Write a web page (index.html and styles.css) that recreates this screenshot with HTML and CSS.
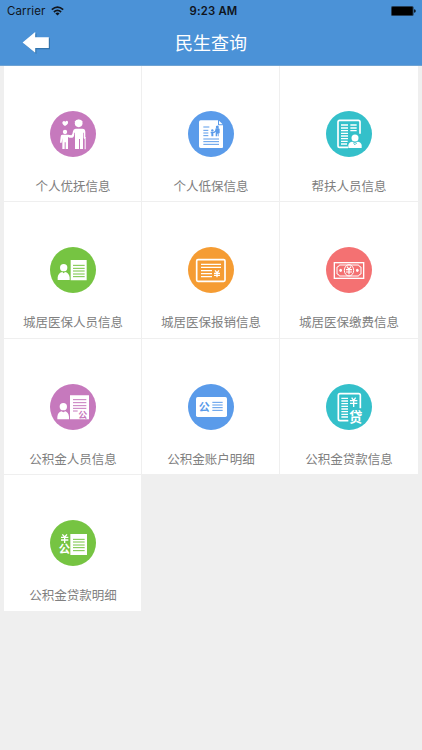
FILE: index.html
```html
<!DOCTYPE html>
<html lang="zh-CN">
<head>
<meta charset="utf-8">
<title>民生查询</title>
<link rel="stylesheet" href="styles.css">
</head>
<body>
<header class="header">
  <div class="status">
    <div class="carrier">Carrier
      <svg class="wifi" viewBox="0 0 13 10"><g fill="none" stroke="#10151c" stroke-width="1.7"><path d="M.8 3.7Q6.5-1.3 12.2 3.7"/><path d="M2.9 6Q6.5 2.8 10.1 6"/></g><path fill="#10151c" d="M4.4 7.4Q6.5 5.7 8.6 7.4L6.5 9.6z"/></svg>
    </div>
    <div class="time">9:23 AM</div>
    <div class="power"><svg class="battery" viewBox="0 0 25 10"><rect width="22.6" height="10" rx="1.6" fill="#263f58"/><rect x="1" y="1" width="20.6" height="8" rx=".6"/><path d="M23.2 3.3q1.5.2 1.5 1.7t-1.5 1.7z"/></svg></div>
  </div>
  <div class="navbar">
    <svg class="back" viewBox="0 0 28 22"><path d="M2 11.7 14.4 1.2V6.2H28V17.2H14.4V22z" fill="#3475ad"/><path d="M.6 10.4 13.2 0V5.2H26.8V16H13.2V20.8z" fill="#fff"/></svg>
    <h1 class="title">民生查询</h1>
  </div>
</header>
<main class="grid">
  <a class="cell">
    <svg class="icon purple" viewBox="51 33 138 138"><circle cx="120" cy="102" r="69"/>
      <g class="w"><path d="M96 78Q85 71 89 65Q93 61 97 65Q102 60 105 65Q107 72 96 78z"/><circle cx="96" cy="96" r="6.5"/><path d="M88 104h17l10 2q4-3 5-12 1-8 8-8h20q9 0 9 10v19h-5V98h-2v49h-9v-30h-3v30h-12V98h-2q0 13-6 15h-9l-4-2v36h-7v-20h-3v20h-7v-33l-2 14h-5l2-17q0-7 5-7z"/><circle cx="137" cy="70" r="11.5"/><path d="M127 67q10-6 20 0l3-1q-13-13-26 0z"/><path d="M153 111h5v37h-3v-32h-2z"/></g></svg>
    <span class="label">个人优抚信息</span>
  </a>
  <a class="cell">
    <svg class="icon blue" viewBox="51 33 138 138"><circle cx="120" cy="102" r="69"/>
      <path class="w" d="M89 61h52v15h15v65q0 3-3 3H89q-5 0-5-5V66q0-5 5-5z"/><path class="w" d="m144 62 11 11h-11z"/>
      <path class="l" d="M97 81h18M97 91h15M97 99h15M97 107h15M97 117h47M97 125h47M97 133h47"/>
      <g class="f"><circle cx="124" cy="91" r="3.5"/><path d="M119 95h9l4-2 2-8h10l2 3v12h-3v9h-3v-8h-2v8h-4V95l-4 4h-3v10h-6v-9h-2z"/><circle cx="139" cy="81" r="4.5"/></g></svg>
    <span class="label">个人低保信息</span>
  </a>
  <a class="cell">
    <svg class="icon teal" viewBox="51 33 138 138"><circle cx="120" cy="102" r="69"/>
      <path class="s" stroke-width="5" d="M117 142H92q-5 0-5-5V66q0-5 5-5h56q5 0 5 5v35"/>
      <path class="s" stroke-width="3.8" d="M96 75h21M124 75h19M96 84h21M124 84h19M96 92h21M124 92h19M96 100h21M96 108h21M96 116h21M96 124h20M96 132h18"/>
      <circle class="w" cx="138" cy="114" r="10.5"/><path class="w" d="M118 144v-9q2-9 12-10l8 4 8-4q10 1 12 10v9z"/><path class="l" stroke-width="2" d="m133 129 5 5 5-5"/></svg>
    <span class="label">帮扶人员信息</span>
  </a>
  <a class="cell">
    <svg class="icon green" viewBox="111 21 138 138"><circle cx="180" cy="90" r="69"/>
      <circle class="w" cx="152" cy="83" r="11"/><path class="w" d="M134 120v-8q2-14 14-16l4 4 4-4q12 2 14 16v8zM173 60h48v61h-48z"/>
      <path class="l" d="M180 76h35M180 85h35M180 93h35M180 102h35M180 110h35"/></svg>
    <span class="label">城居医保人员信息</span>
  </a>
  <a class="cell">
    <svg class="icon orange" viewBox="111 21 138 138"><circle cx="180" cy="90" r="69"/>
      <rect class="s" stroke-width="5" x="137" y="59" width="85" height="65" rx="4"/>
      <path class="s" stroke-width="4" d="M150 73h60M150 82h60M150 92h33M150 101h33M150 110h33"/>
      <path class="s" stroke-width="4" d="m192 91 6 8 6-8M198 99v13M189 100h18M189 106h18"/></svg>
    <span class="label">城居医保报销信息</span>
  </a>
  <a class="cell">
    <svg class="icon red" viewBox="111 21 138 138"><circle cx="180" cy="90" r="69"/>
      <rect class="s" stroke-width="4" x="136" y="68" width="88" height="47"/>
      <path class="s" stroke-width="3" d="M151 75h58q1 6 7 6v21q-6 0-7 6h-58q-1-6-7-6V81q6 0 7-6z"/>
      <g class="w"><ellipse cx="155" cy="91" rx="4" ry="5"/><ellipse cx="205" cy="91" rx="4" ry="5"/></g>
      <ellipse class="s" stroke-width="3" cx="180" cy="91" rx="14" ry="17"/>
      <path class="s" stroke-width="3.6" d="m174 80 6 8 6-8M180 88v15M171 89h18M171 96h18"/></svg>
    <span class="label">城居医保缴费信息</span>
  </a>
  <a class="cell">
    <svg class="icon purple" viewBox="111 26 138 138"><circle cx="180" cy="95" r="69"/>
      <circle class="w" cx="151" cy="94" r="11"/><path class="w" d="M133 132v-8q2-13 12-16 6 5 12 0 9 3 11 16v8zM171 60h57v72h-57z"/>
      <path class="l" d="M180 73h40M180 82h40M180 91h40M180 99h40M180 107h14"/>
      <text class="f glyph" x="209" y="128" font-size="27">公</text></svg>
    <span class="label">公积金人员信息</span>
  </a>
  <a class="cell">
    <svg class="icon blue" viewBox="111 26 138 138"><circle cx="180" cy="95" r="69"/>
      <rect class="w" x="135" y="65" width="93" height="60" rx="5"/>
      <text class="f glyph" x="160" y="107" font-size="33">公</text><path class="l" d="M184 81h31M184 89h31M184 97h31M184 105h31"/></svg>
    <span class="label">公积金账户明细</span>
  </a>
  <a class="cell">
    <svg class="icon teal" viewBox="525 26 138 138"><circle cx="594" cy="95" r="69"/>
      <path class="s" stroke-width="5" d="M592 136h-25q-5 0-5-5V60q0-5 5-5h56q5 0 5 5v39"/>
      <path class="s" stroke-width="3.8" d="M571 69h20M571 77h20M571 85h20M571 93h20M571 101h20M571 109h20M571 117h20M571 125h20"/>
      <path class="s" stroke-width="4" d="m602 67 6 8 6-8M608 75v20M597 76h22M597 84h22"/>
      <text class="w glyph" x="614" y="139" font-size="40">贷</text></svg>
    <span class="label">公积金贷款信息</span>
  </a>
  <a class="cell">
    <svg class="icon green" viewBox="150 165 138 138"><circle cx="219" cy="234" r="69"/>
      <path class="s" stroke-width="4" d="m187 208 7 8 7-8M194 216v18M183 217h22M183 225h22"/>
      <text class="w glyph" x="193" y="264" font-size="34">公</text>
      <path class="w" d="M211 207h50v63h-50z"/><path class="l" d="M219 223h35M219 231h35M219 240h35M219 248h35M219 257h35"/></svg>
    <span class="label">公积金贷款明细</span>
  </a>
</main>
</body>
</html>
```
FILE: styles.css
```css
* { box-sizing: border-box; }
body {
  margin: 0;
  min-height: 750px;
  background: #efefef;
  font-family: "Liberation Sans", "Noto Sans CJK SC", sans-serif;
}
.header {
  height: 66px;
  background: #4b92d7;
  border-bottom: 1px solid #6fa3d3;
}
.status {
  display: grid;
  grid-template-columns: 1fr auto 1fr;
  align-items: center;
  height: 22px;
  padding: 0 6px 0 7px;
  font-family: Inter, sans-serif;
  font-size: 11px;
  color: #10151c;
}
.carrier { display: flex; align-items: center; gap: 6px; font-size: 11.5px; letter-spacing: .1px; }
.wifi { width: 13px; height: 10px; }
.time { font-weight: 600; font-size: 11.3px; letter-spacing: .2px; padding-left: 4px; }
.power { display: flex; justify-content: flex-end; }
.battery { width: 25px; height: 10px; }
.navbar {
  display: grid;
  grid-template-columns: 1fr auto 1fr;
  align-items: center;
  height: 42px;
}
.back { width: 28px; height: 22px; margin-left: 22px; }
.title {
  margin: 0;
  padding-top: 2px;
  font-size: 18px;
  font-weight: 400;
  line-height: 24px;
  color: #fff;
}
.grid {
  display: grid;
  grid-template-columns: 137px 137px 138px;
  grid-auto-rows: 135.4px;
  gap: 1px;
  width: 414px;
  margin-left: 4px;
  background: linear-gradient(#efefef, #efefef) no-repeat 0 0 / 100% 408.2px;
}
.cell {
  display: flex;
  flex-direction: column;
  align-items: center;
  padding: 45px 0 0 1px;
  background: #fff;
}
.cell:nth-child(3n) { padding-left: 0; }
.icon { width: 46px; height: 46px; flex: none; fill: currentColor; }
.purple { color: #c679bd; }
.blue { color: #5a9bea; }
.teal { color: #34c0ca; }
.green { color: #76c442; }
.orange { color: #f59c33; }
.red { color: #f47172; }
.w { fill: #fff; }
.f { fill: currentColor; }
.s { fill: none; stroke: #fff; }
.l { fill: none; stroke: currentColor; stroke-width: 3; }
.glyph { font-family: "Noto Sans CJK SC", sans-serif; font-weight: 700; text-anchor: middle; }
.label {
  margin-top: 20px;
  font-size: 12.5px;
  line-height: 20px;
  color: #808080;
  white-space: nowrap;
}
```
